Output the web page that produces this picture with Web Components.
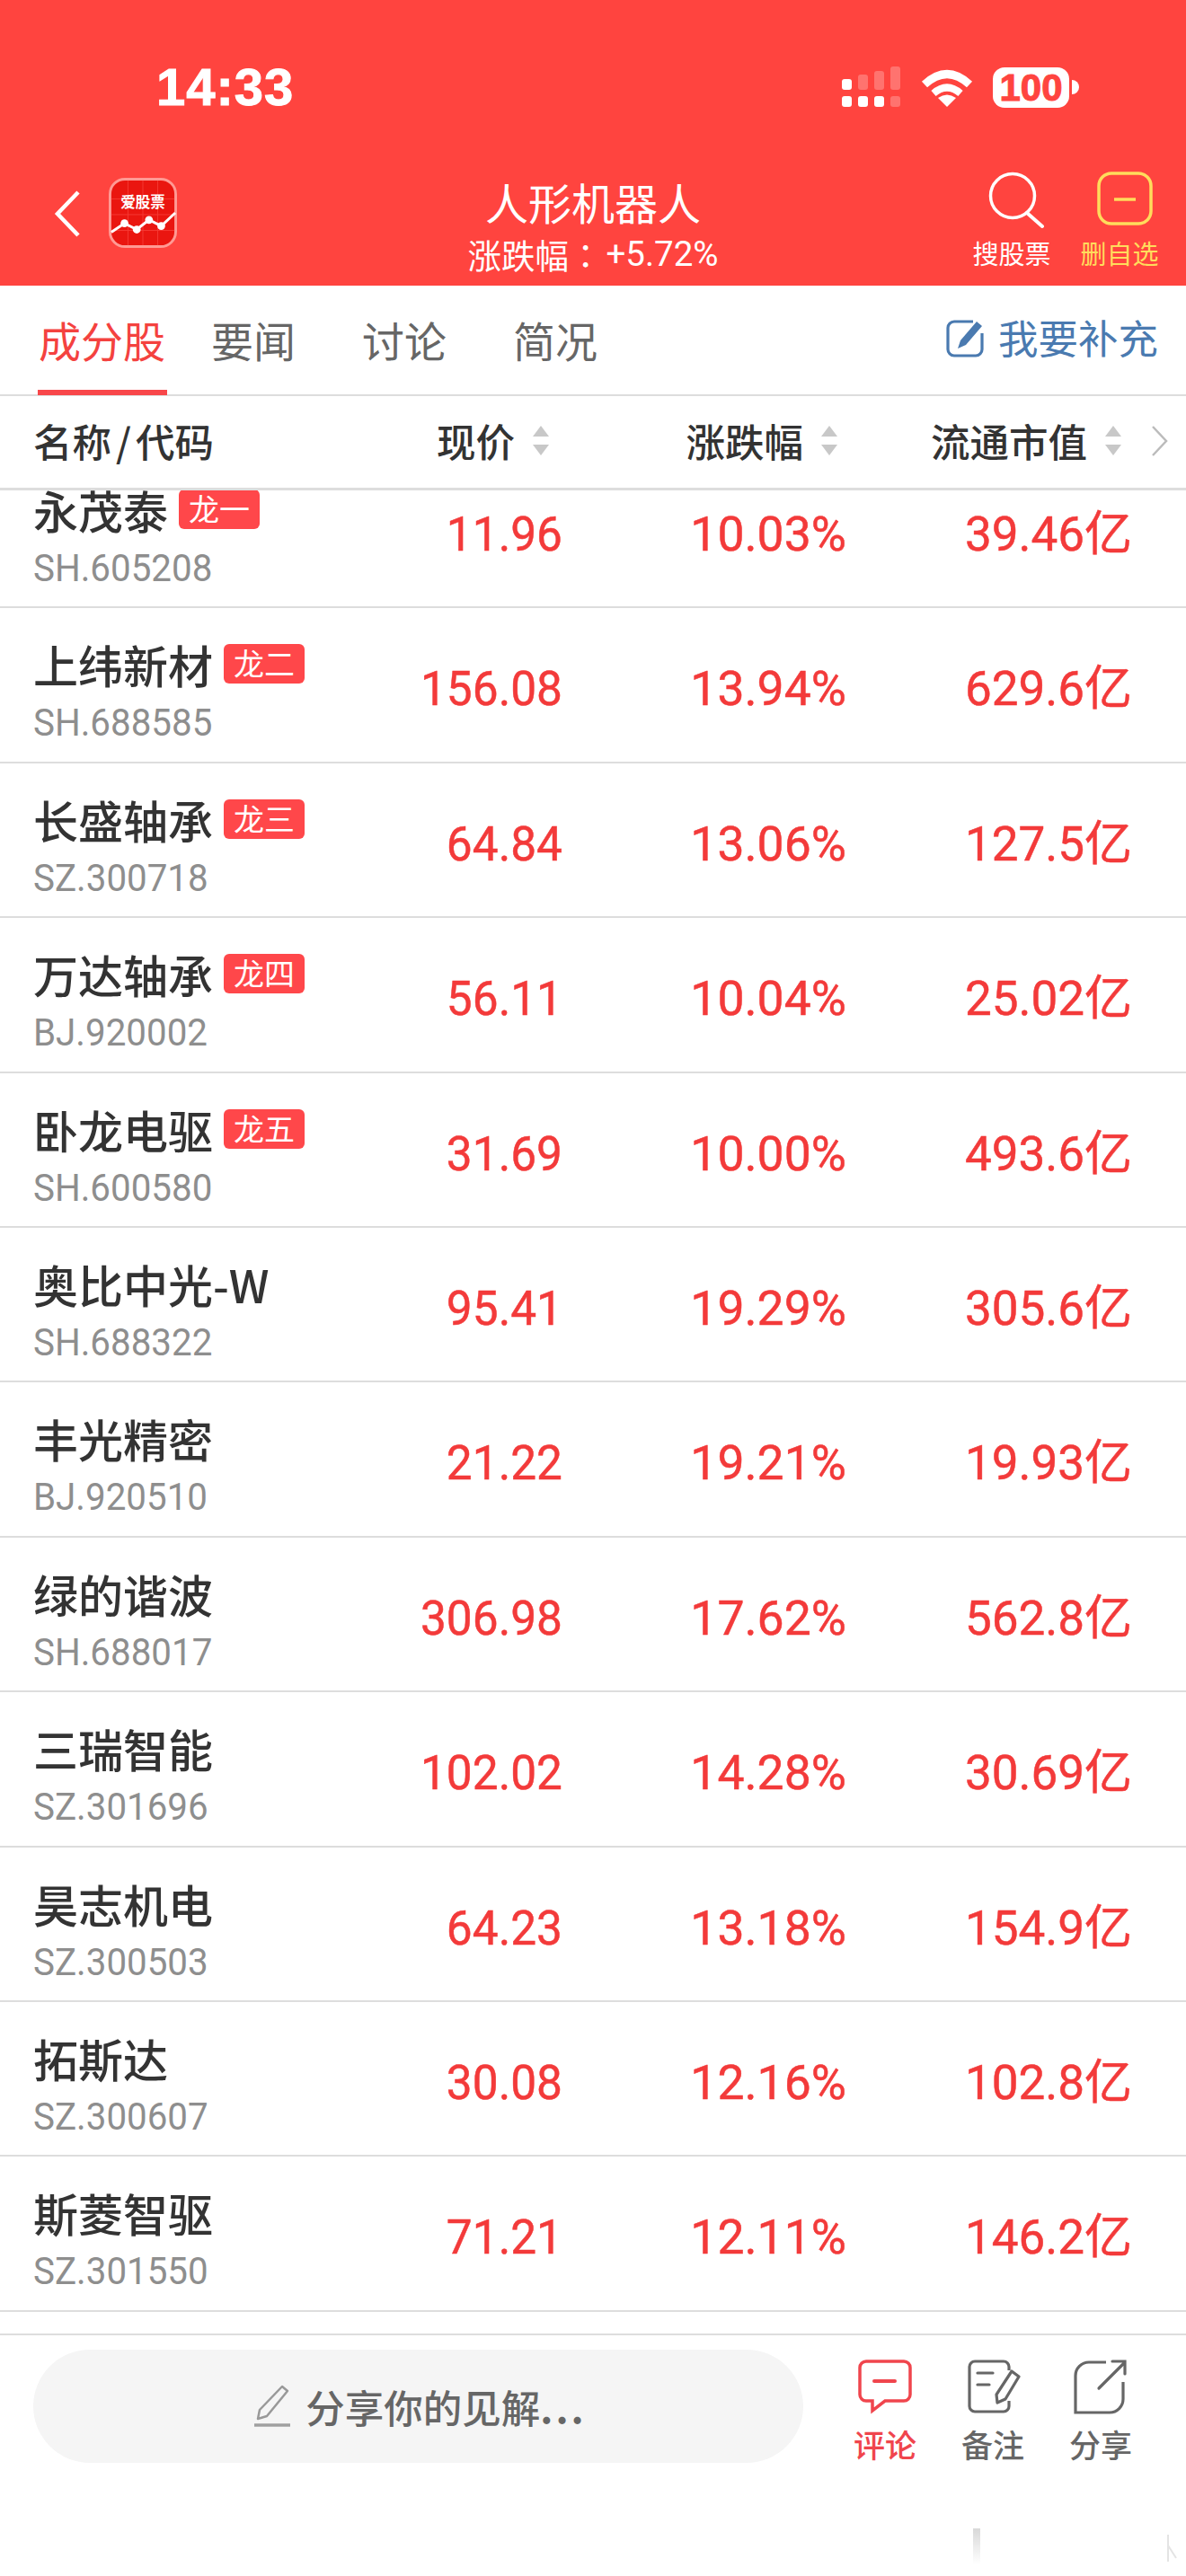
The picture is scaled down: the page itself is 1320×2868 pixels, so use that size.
<!DOCTYPE html>
<html lang="zh">
<head>
<meta charset="utf-8">
<title>人形机器人</title>
<style>
  html, body { margin: 0; padding: 0; background: #fff; }
  body { width: 1320px; height: 2868px; overflow: hidden; font-family: "Noto Sans CJK SC", sans-serif; }
</style>
</head>
<body>
<status-bar></status-bar>
<nav-bar></nav-bar>
<tab-bar></tab-bar>
<table-head></table-head>
<stock-list></stock-list>
<comment-bar></comment-bar>

<script>
const CJK = '"Noto Sans CJK SC"';
const NUM = `Roboto, "Liberation Sans", ${CJK}, sans-serif`;

class StatusBar extends HTMLElement {
    constructor() {
        super();
        this.attachShadow({ mode: 'open' });
    }

    connectedCallback() {
        this.shadowRoot.innerHTML = `
      <style>
        :host { display: flex; box-sizing: border-box; height: 186px; padding: 8px 119px 0 174px; background: #ff443f; color: #fff; align-items: center; justify-content: space-between; }
        .time { font: 700 58px/1 "Liberation Sans", sans-serif; letter-spacing: 1px; -webkit-text-stroke: 1px #fff; }
        .right { display: flex; align-items: center; gap: 22px; }
        .batt { display: flex; align-items: center; }
        .body { width: 85px; height: 45px; border-radius: 13px; background: #fff; color: #ff443f; font: 700 42px/45px "Liberation Sans", sans-serif; text-align: center; -webkit-text-stroke: 1px #ff443f; }
        .tip { width: 8px; height: 16px; margin-left: 3px; background: #fff; border-radius: 0 8px 8px 0; }
      </style>
      <div class="time">14:33</div>
      <div class="right">
        <svg width="66" height="46" viewBox="0 0 66 46" fill="#fff">
          <rect x="0" y="14" width="11" height="12" rx="3"/>
          <rect x="18" y="9" width="11" height="17" rx="3" opacity=".25"/>
          <rect x="36" y="5" width="11" height="21" rx="3" opacity=".25"/>
          <rect x="54" y="0" width="11" height="26" rx="3" opacity=".25"/>
          <rect x="0" y="33" width="11" height="12" rx="3"/>
          <rect x="18" y="33" width="11" height="12" rx="3"/>
          <rect x="36" y="33" width="11" height="12" rx="3"/>
          <rect x="54" y="33" width="11" height="12" rx="3" opacity=".25"/>
        </svg>
        <svg width="58" height="44" viewBox="0 0 58 44">
          <path d="M4 19Q29-4 54 19" fill="none" stroke="#fff" stroke-width="9"/>
          <path d="M14 29Q29 16 44 29" fill="none" stroke="#fff" stroke-width="8"/>
          <path d="M19 34Q29 27 39 34L29 44z" fill="#fff"/>
        </svg>
        <div class="batt"><div class="body">100</div><div class="tip"></div></div>
      </div>
    `;
    }
}
customElements.define('status-bar', StatusBar);

class NavAction extends HTMLElement {
    constructor() {
        super();
        this.attachShadow({ mode: 'open' });
    }

    connectedCallback() {
        this.shadowRoot.innerHTML = `
      <style>
        :host { display: flex; flex-direction: column; align-items: center; width: 88px; font: 400 29px/36px ${CJK}, sans-serif; color: inherit; }
        .icon { height: 72px; display: flex; align-items: flex-start; }
      </style>
      <div class="icon"><slot name="icon"></slot></div>
      <slot></slot>
    `;
    }
}
customElements.define('nav-action', NavAction);

class NavBar extends HTMLElement {
    constructor() {
        super();
        this.attachShadow({ mode: 'open' });
    }

    connectedCallback() {
        this.shadowRoot.innerHTML = `
      <style>
        :host { display: grid; box-sizing: border-box; height: 132px; grid-template-columns: 450px 300px 1fr; background: #ff443f; color: #fff; font-family: ${CJK}, sans-serif; padding: 0 30px 0 60px; overflow: hidden; }
        .left { display: flex; gap: 31px; align-items: flex-start; padding-top: 12px; }
        .back { margin-top: 14px; }
        .mid { text-align: center; white-space: nowrap; display: flex; flex-direction: column; align-items: center; }
        .title { font-size: 48px; line-height: 56px; margin-top: 10px; }
        .sub { font-size: 37.5px; line-height: 44px; margin-top: 9px; display: flex; }
        .sub i { font: 400 37.5px/44px "Noto Sans CJK TC", sans-serif; }
        .sub b { font: 400 38.5px/44px ${NUM}; margin-left: 4px; }
        .right { display: flex; justify-content: flex-end; gap: 32px; padding-top: 5px; }
        .right svg.s { margin-left: 2px; }
        .yel { color: #ffdc5c; }
        .yel svg { margin-left: 11px; }
      </style>
      <div class="left">
        <svg class="back" width="30" height="52" viewBox="0 0 30 52"><path d="M27 2L4 26l23 24" fill="none" stroke="#fff" stroke-width="4.5"/></svg>
        <svg width="76" height="78" viewBox="0 0 78 80">
          <rect x="1.5" y="1.5" width="75" height="77" rx="17" fill="#ea1610" stroke="#ff9a94" stroke-width="3"/>
          <path d="M3 24H75M3 42H75M3 60H75M22 3V77M39 3V77M56 3V77" stroke="#f53a33" stroke-width="1"/>
          <text x="39" y="34" text-anchor="middle" font-family="Noto Sans CJK SC" font-weight="700" font-size="17" fill="#fff">爱股票</text>
          <path d="M3 62L18 52 32 59 46 48 60 55 76 40" fill="none" stroke="#fff" stroke-width="3"/>
          <g fill="#fff"><circle cx="18" cy="52" r="4.5"/><circle cx="32" cy="59" r="4.5"/><circle cx="46" cy="48" r="4.5"/><circle cx="60" cy="55" r="4.5"/></g>
        </svg>
      </div>
      <div class="mid">
        <div class="title">人形机器人</div>
        <div class="sub">涨跌幅<i>：</i><b>+5.72%</b></div>
      </div>
      <div class="right">
        <nav-action>
          <svg class="s" slot="icon" width="70" height="66" viewBox="0 0 70 66"><circle cx="35" cy="27" r="24.5" fill="none" stroke="#fff" stroke-width="3.5"/><path d="M51 46l17 15" fill="none" stroke="#fff" stroke-width="4" stroke-linecap="round"/></svg>
          搜股票
        </nav-action>
        <nav-action class="yel">
          <svg slot="icon" width="62" height="62" viewBox="0 0 62 62"><rect x="2" y="2" width="58" height="56" rx="14" fill="none" stroke="#ffdc5c" stroke-width="3.5"/><path d="M19 31H43" stroke="#ffdc5c" stroke-width="3.5"/></svg>
          删自选
        </nav-action>
      </div>
    `;
    }
}
customElements.define('nav-bar', NavBar);

class TabBar extends HTMLElement {
    constructor() {
        super();
        this.attachShadow({ mode: 'open' });
    }

    connectedCallback() {
        this.shadowRoot.innerHTML = `
      <style>
        :host { display: flex; box-sizing: border-box; height: 123px; background: #fff; border-bottom: 2px solid #ddd; font: 400 47px/1 ${CJK}, sans-serif; color: #666; padding-right: 31px; align-items: stretch; }
        .tab { width: 94px; margin-left: 74px; padding-top: 36px; white-space: nowrap; box-sizing: border-box; }
        .tab.on { width: 144px; margin-left: 42px; color: #f4423f; box-shadow: inset 0 -6px 0 #f8474a; padding-left: 1px; margin-right: -25px; height: 122px; }
        .add { margin-left: auto; display: flex; align-items: center; gap: 16px; font-size: 44.5px; color: #4a7ab0; padding-bottom: 6px; }
      </style>
      <div class="tab on">成分股</div>
      <div class="tab">要闻</div>
      <div class="tab">讨论</div>
      <div class="tab">简况</div>
      <div class="add">
        <svg width="42" height="44" viewBox="0 0 42 44">
          <path d="M30 4H9a7 7 0 0 0-7 7v24a7 7 0 0 0 7 7h24a7 7 0 0 0 7-7V17" fill="none" stroke="#4a7ab0" stroke-width="3.2"/>
          <path d="M34 4l6 5-18 21-9 4 3-9z" fill="#4a7ab0"/>
        </svg>
        我要补充
      </div>
    `;
    }
}
customElements.define('tab-bar', TabBar);

class SortHead extends HTMLElement {
    constructor() {
        super();
        this.attachShadow({ mode: 'open' });
    }

    connectedCallback() {
        this.shadowRoot.innerHTML = `
      <style>
        :host { display: flex; align-items: center; gap: 20px; justify-content: flex-end; }
      </style>
      <slot></slot>
      <svg width="18" height="34" viewBox="0 0 18 34" fill="#c8c8c8"><path d="M9 0l9 12H0z"/><path d="M0 21h18L9 33z"/></svg>
    `;
    }
}
customElements.define('sort-head', SortHead);

class TableHead extends HTMLElement {
    constructor() {
        super();
        this.attachShadow({ mode: 'open' });
    }

    connectedCallback() {
        this.shadowRoot.innerHTML = `
      <style>
        :host { display: grid; box-sizing: border-box; height: 105px; grid-template-columns: 400px 211px 321px 316px 1fr; background: #fff; border-bottom: 3px solid #ddd; font: 500 43.5px/1 ${CJK}, sans-serif; color: #333; align-items: center; padding-bottom: 2px; white-space: nowrap; }
        .name { padding-left: 37px; }
        .name span { margin: 0 5px; }
        svg { margin-left: 33px; }
      </style>
      <div class="name">名称<span>/</span>代码</div>
      <sort-head>现价</sort-head>
      <sort-head>涨跌幅</sort-head>
      <sort-head>流通市值</sort-head>
      <svg width="20" height="36" viewBox="0 0 20 36"><path d="M2 2l15 16L2 34" fill="none" stroke="#bbb" stroke-width="2.5"/></svg>
    `;
    }
}
customElements.define('table-head', TableHead);

class StockTag extends HTMLElement {
    constructor() {
        super();
        this.attachShadow({ mode: 'open' });
    }

    connectedCallback() {
        this.shadowRoot.innerHTML = `
      <style>
        :host { display: inline-block; box-sizing: border-box; width: 90px; height: 44px; margin-left: 12px; background: #ff474a; color: #fff; border-radius: 6px; font: 400 34px/42px ${CJK}, sans-serif; text-align: center; }
      </style>
      <slot></slot>
    `;
    }
}
customElements.define('stock-tag', StockTag);

class StockRow extends HTMLElement {
    constructor() {
        super();
        this.attachShadow({ mode: 'open' });
    }

    connectedCallback() {
        const a = (k) => this.getAttribute(k) || '';
        this.shadowRoot.innerHTML = `
      <style>
        :host { display: grid; box-sizing: border-box; height: 172.4px; grid-template-columns: 400px 226px 316px 318px; border-bottom: 2px solid #ddd; background: #fff; }
        .info { padding: 34px 0 0 37px; }
        .name { font: 500 50px/56px ${CJK}, sans-serif; color: #333; display: flex; align-items: center; height: 56px; white-space: nowrap; }
        .code { font: 400 42px/44px ${NUM}; color: #8e8e8e; margin-top: 16px; transform: scaleX(.96); transform-origin: left; white-space: nowrap; }
        .val { font: 400 53px/60px ${NUM}; color: #f33a3a; -webkit-text-stroke: .5px #f33a3a; text-align: right; padding-top: 60px; transform-origin: right; white-space: nowrap; }
        .price { transform: scaleX(.97); }
        .pct { transform: scaleX(1.01); }
      </style>
      <div class="info">
        <div class="name">${a('name')}<slot></slot></div>
        <div class="code">${a('code')}</div>
      </div>
      <div class="val price">${a('price')}</div>
      <div class="val pct">${a('pct')}</div>
      <div class="val">${a('cap')}</div>
    `;
    }
}
customElements.define('stock-row', StockRow);

const stocks = [
    ['永茂泰', 'SH.605208', '11.96', '10.03%', '39.46亿', '龙一'],
    ['上纬新材', 'SH.688585', '156.08', '13.94%', '629.6亿', '龙二'],
    ['长盛轴承', 'SZ.300718', '64.84', '13.06%', '127.5亿', '龙三'],
    ['万达轴承', 'BJ.920002', '56.11', '10.04%', '25.02亿', '龙四'],
    ['卧龙电驱', 'SH.600580', '31.69', '10.00%', '493.6亿', '龙五'],
    ['奥比中光-W', 'SH.688322', '95.41', '19.29%', '305.6亿'],
    ['丰光精密', 'BJ.920510', '21.22', '19.21%', '19.93亿'],
    ['绿的谐波', 'SH.688017', '306.98', '17.62%', '562.8亿'],
    ['三瑞智能', 'SZ.301696', '102.02', '14.28%', '30.69亿'],
    ['昊志机电', 'SZ.300503', '64.23', '13.18%', '154.9亿'],
    ['拓斯达', 'SZ.300607', '30.08', '12.16%', '102.8亿'],
    ['斯菱智驱', 'SZ.301550', '71.21', '12.11%', '146.2亿'],
];

class StockList extends HTMLElement {
    constructor() {
        super();
        this.attachShadow({ mode: 'open' });
    }

    connectedCallback() {
        this.shadowRoot.innerHTML = `
      <style>
        :host { display: block; height: 2030px; overflow: hidden; background: #fff; }
        .scroll { margin-top: -41px; }
      </style>
      <div class="scroll"><slot></slot></div>
    `;
        for (const s of stocks) {
            const row = document.createElement('stock-row');
            row.setAttribute('name', s[0]);
            row.setAttribute('code', s[1]);
            row.setAttribute('price', s[2]);
            row.setAttribute('pct', s[3]);
            row.setAttribute('cap', s[4]);
            if (s[5]) {
                const tag = document.createElement('stock-tag');
                tag.textContent = s[5];
                row.appendChild(tag);
            }
            this.appendChild(row);
        }
    }
}
customElements.define('stock-list', StockList);

class FootAction extends HTMLElement {
    constructor() {
        super();
        this.attachShadow({ mode: 'open' });
    }

    connectedCallback() {
        this.shadowRoot.innerHTML = `
      <style>
        :host { display: flex; flex-direction: column; align-items: center; width: 72px; font: 500 35px/44px ${CJK}, sans-serif; color: #666; }
        .icon { height: 74px; }
      </style>
      <div class="icon"><slot name="icon"></slot></div>
      <slot></slot>
    `;
    }
}
customElements.define('foot-action', FootAction);

class CommentBar extends HTMLElement {
    constructor() {
        super();
        this.attachShadow({ mode: 'open' });
    }

    connectedCallback() {
        this.shadowRoot.innerHTML = `
      <style>
        :host { display: flex; position: relative; box-sizing: border-box; height: 270px; border-top: 2px solid #ddd; margin-top: 22px; background: #fff; padding: 16px 0 0 37px; font-family: ${CJK}, sans-serif; }
        .pill { width: 857px; height: 126px; border-radius: 63px; background: #f5f5f5; color: #666; font-size: 43.5px; font-weight: 500; display: flex; align-items: center; justify-content: center; gap: 16px; padding-left: 4px; box-sizing: border-box; white-space: nowrap; }
        .dots { letter-spacing: 3px; font-weight: 700; }
        .acts { display: flex; gap: 48px; margin-left: 55px; margin-top: 9px; }
        .red { color: #f0454d; }
        .mark { position: absolute; left: 1040px; bottom: 0; }
      </style>
      <div class="pill">
        <svg width="42" height="48" viewBox="0 0 42 48"><path d="M32 2l6 5-23 28-10 3 2-10z" fill="none" stroke="#999" stroke-width="2.5" stroke-linejoin="round"/><path d="M1 45H41" stroke="#a0a0a0" stroke-width="3.5"/></svg>
        <span>分享你的见解<span class="dots">...</span></span>
      </div>
      <div class="acts">
        <foot-action class="red">
          <svg slot="icon" width="66" height="64" viewBox="0 0 66 64"><path d="M12 4H54a7 7 0 0 1 7 7V41a7 7 0 0 1-7 7H33L19 59V48H12a7 7 0 0 1-7-7V11a7 7 0 0 1 7-7z" fill="none" stroke="#f0454d" stroke-width="3.5"/><path d="M21 26H44" stroke="#f0454d" stroke-width="4" stroke-linecap="round"/></svg>
          评论
        </foot-action>
        <foot-action>
          <svg slot="icon" width="62" height="64" viewBox="0 0 62 64"><path d="M49 14V10a6 6 0 0 0-6-6H11a6 6 0 0 0-6 6v44a6 6 0 0 0 6 6h32a6 6 0 0 0 6-6v-6" fill="none" stroke="#666" stroke-width="3.2"/><path d="M14 17H31M14 30H27" stroke="#666" stroke-width="3.2" stroke-linecap="round"/><path d="M52 15l8 6-15 25-9 4-1-9z" fill="none" stroke="#666" stroke-width="3.2" stroke-linejoin="round"/></svg>
          备注
        </foot-action>
        <foot-action>
          <svg slot="icon" width="64" height="64" viewBox="0 0 64 64"><path d="M38 5H19a15 15 0 0 0-15 15v41h38a15 15 0 0 0 15-15V27" fill="none" stroke="#666" stroke-width="3.2"/><path d="M30 34L59 5M45 4H59V18" fill="none" stroke="#666" stroke-width="3.2" stroke-linecap="round"/></svg>
          分享
        </foot-action>
      </div>
      <svg class="mark" width="280" height="78" viewBox="0 0 280 78">
        <defs><linearGradient id="f" x1="0" y1="0" x2="0" y2="1"><stop offset="0" stop-color="#d8d8d8"/><stop offset="1" stop-color="#fff"/></linearGradient></defs>
        <rect x="43" y="25" width="8" height="40" fill="url(#f)"/>
        <path d="M260 32V62M260 44l9 14" fill="none" stroke="#e4e4e4" stroke-width="2"/>
      </svg>
    `;
    }
}
customElements.define('comment-bar', CommentBar);
</script>
</body>
</html>
